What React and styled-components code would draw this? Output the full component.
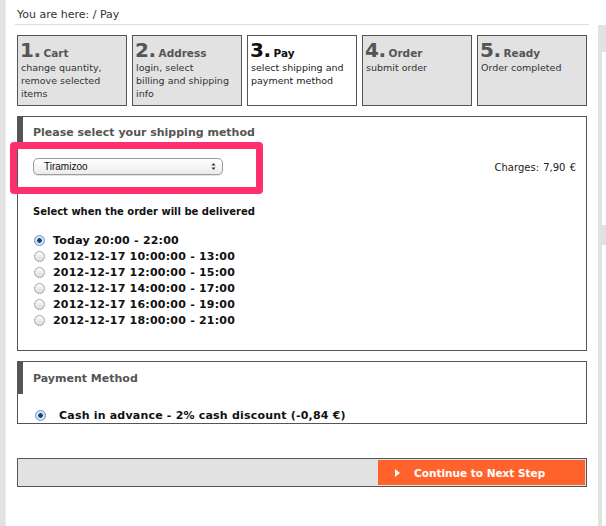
import React from 'react';
import styled, { createGlobalStyle } from 'styled-components';

const GlobalStyle = createGlobalStyle`
  html, body {
    margin: 0;
    padding: 0;
    background: #fff;
  }
  body {
    font-family: "DejaVu Sans", Verdana, sans-serif;
    color: #222;
  }
`;

const Page = styled.div`
  display: flex;
  flex-direction: row;
  width: 606px;
  height: 526px;
  overflow: hidden;
`;

const LeftRail = styled.div`
  width: 5px;
  background: #e2e2e2;
  border-right: 1px solid #ececec;
`;

const RightRail = styled.div`
  width: 8px;
  padding-top: 25px;
  display: flex;
  flex-direction: column;
`;

const RailPiece = styled.div`
  height: ${(p) => p.h}px;
  background: ${(p) => (p.light ? '#fff' : '#e2e2e2')};
  border-left: 4px solid #e2e2e2;
  flex: ${(p) => (p.grow ? 1 : 'none')};
`;

const Main = styled.div`
  flex: 1;
  padding: 0 11px;
  display: flex;
  flex-direction: column;
`;

const Breadcrumb = styled.div`
  height: 25px;
  font-size: 11px;
  color: #333;
  display: flex;
  align-items: flex-end;
  padding: 0 0 2px 2px;
  box-sizing: border-box;
  border-bottom: 1px solid #ddd;
  margin: 0 -2px;
  line-height: 14px;
`;

const Steps = styled.div`
  display: grid;
  grid-template-columns: repeat(5, 110px);
  gap: 5px;
  margin-top: 10px;
`;

const Step = styled.div`
  height: 71px;
  box-sizing: border-box;
  border: 1px solid #555;
  background: ${(p) => (p.active ? '#fff' : '#e2e2e2')};
  padding: 2px 0 0 2px;
  color: ${(p) => (p.active ? '#111' : '#555')};
`;

const StepHead = styled.div`
  display: flex;
  align-items: baseline;
  height: 23px;
`;

const StepNum = styled.span`
  font-size: 20px;
  font-weight: bold;
  letter-spacing: -0.5px;
`;

const StepTitle = styled.span`
  font-size: 10.5px;
  font-weight: bold;
  margin-left: 3px;
`;

const StepDesc = styled.div`
  font-size: 9.5px;
  line-height: 13px;
  padding-left: 1px;
  color: ${(p) => (p.active ? '#222' : '#333')};
`;

const Panel = styled.div`
  position: relative;
  border: 1px solid #555;
  margin-top: ${(p) => p.mt}px;
  height: ${(p) => p.h}px;
  box-sizing: border-box;
`;

const PanelHead = styled.div`
  height: ${(p) => p.h}px;
  box-sizing: border-box;
  padding-top: ${(p) => p.pt || 0}px;
  border-left: 6px solid #555;
  margin-left: -1px;
  padding-left: 10px;
  display: flex;
  align-items: center;
  font-size: 11px;
  font-weight: bold;
  color: #555;
`;

const SelectRow = styled.div`
  display: flex;
  align-items: center;
  justify-content: space-between;
  padding: 13px 10px 0 15px;
`;

const FakeSelect = styled.div`
  width: 190px;
  height: 17px;
  box-sizing: border-box;
  border: 1px solid #9c9c9c;
  border-radius: 5px;
  background: linear-gradient(#ffffff, #ececec);
  display: flex;
  align-items: center;
  justify-content: space-between;
  padding: 0 6px 0 10px;
  font-family: "Liberation Sans", Arial, sans-serif;
  font-size: 10px;
  color: #111;
  box-shadow: 0 1px 1px rgba(0, 0, 0, 0.12);
`;

const Charges = styled.div`
  font-size: 10px;
  color: #222;
  word-spacing: 1px;
  margin-top: 2px;
`;

const Highlight = styled.div`
  position: absolute;
  left: -8px;
  top: 25px;
  width: 253px;
  height: 52px;
  box-sizing: border-box;
  border: 7px solid #ff2f6e;
  border-radius: 4px;
`;

const SubTitle = styled.div`
  font-size: 10px;
  font-weight: bold;
  color: #111;
  padding: 31px 0 0 15px;
`;

const RadioList = styled.div`
  display: flex;
  flex-direction: column;
  padding: 15px 0 0 16px;
`;

const RadioRow = styled.div`
  display: flex;
  align-items: center;
  height: 16px;
  font-size: 11px;
  letter-spacing: 0.22px;
  font-weight: bold;
  color: #111;
  gap: 8px;
`;

const Radio = styled.span`
  width: 11px;
  height: 11px;
  box-sizing: border-box;
  border-radius: 50%;
  border: 1px solid ${(p) => (p.checked ? '#6d8fc2' : '#a6a6a6')};
  background: ${(p) =>
    p.checked
      ? 'radial-gradient(circle, #1e3f7a 0 2px, #c9dbf3 2.5px, #e9f1fb 100%)'
      : 'linear-gradient(#fafafa, #dcdcdc)'};
  flex: none;
`;

const PayRow = styled.div`
  display: flex;
  align-items: center;
  gap: 13px;
  padding: 15px 0 0 17px;
  font-size: 11px;
  letter-spacing: 0.2px;
  font-weight: bold;
  color: #111;
`;

const ActionBar = styled.div`
  margin-top: 34px;
  height: 29px;
  box-sizing: border-box;
  border: 1px solid #555;
  background: #e2e2e2;
  display: flex;
  justify-content: flex-end;
  padding: 1px;
`;

const NextButton = styled.button`
  width: 207px;
  border: none;
  background: #ff632b;
  color: #fff;
  font-family: "DejaVu Sans", Verdana, sans-serif;
  font-size: 10.5px;
  font-weight: bold;
  display: flex;
  align-items: center;
  padding: 0 0 0 17px;
  gap: 14px;
  cursor: pointer;
`;

const steps = [
  { n: '1.', t: 'Cart', d: ['change quantity,', 'remove selected', 'items'] },
  { n: '2.', t: 'Address', d: ['login, select', 'billing and shipping', 'info'] },
  { n: '3.', t: 'Pay', d: ['select shipping and', 'payment method'], active: true },
  { n: '4.', t: 'Order', d: ['submit order'] },
  { n: '5.', t: 'Ready', d: ['Order completed'] },
];

const slots = [
  'Today 20:00 - 22:00',
  '2012-12-17 10:00:00 - 13:00',
  '2012-12-17 12:00:00 - 15:00',
  '2012-12-17 14:00:00 - 17:00',
  '2012-12-17 16:00:00 - 19:00',
  '2012-12-17 18:00:00 - 21:00',
];

function App() {
  return (
    <>
      <GlobalStyle />
      <Page>
        <LeftRail />
        <Main>
          <Breadcrumb>You are here: / Pay</Breadcrumb>

          <Steps>
            {steps.map((s) => (
              <Step key={s.n} active={s.active}>
                <StepHead>
                  <StepNum>{s.n}</StepNum>
                  <StepTitle>{s.t}</StepTitle>
                </StepHead>
                {s.d.map((line) => (
                  <StepDesc key={line} active={s.active}>
                    {line}
                  </StepDesc>
                ))}
              </Step>
            ))}
          </Steps>

          <Panel mt={10} h={235}>
            <PanelHead h={28} pt={3}>
              Please select your shipping method
            </PanelHead>
            <SelectRow>
              <FakeSelect>
                <span>Tiramizoo</span>
                <svg width="5" height="9" viewBox="0 0 5 9">
                  <path d="M0.5 3.5 L2.5 1 L4.5 3.5 Z" fill="#333" />
                  <path d="M0.5 5.5 L2.5 8 L4.5 5.5 Z" fill="#333" />
                </svg>
              </FakeSelect>
              <Charges>Charges: 7,90 €</Charges>
            </SelectRow>
            <SubTitle>Select when the order will be delivered</SubTitle>
            <RadioList>
              {slots.map((s, i) => (
                <RadioRow key={s}>
                  <Radio checked={i === 0} />
                  {s}
                </RadioRow>
              ))}
            </RadioList>
            <Highlight />
          </Panel>

          <Panel mt={10} h={63}>
            <PanelHead h={32}>Payment Method</PanelHead>
            <PayRow>
              <Radio checked />
              Cash in advance - 2% cash discount (-0,84 €)
            </PayRow>
          </Panel>

          <ActionBar>
            <NextButton type="button">
              <svg width="5" height="8" viewBox="0 0 5 8">
                <path d="M0 0 L5 4 L0 8 Z" fill="#fff" />
              </svg>
              Continue to Next Step
            </NextButton>
          </ActionBar>
        </Main>
        <RightRail>
          <RailPiece h={27} />
          <RailPiece h={173} light />
          <RailPiece h={20} />
          <RailPiece grow light />
        </RightRail>
      </Page>
    </>
  );
}

export default App;
